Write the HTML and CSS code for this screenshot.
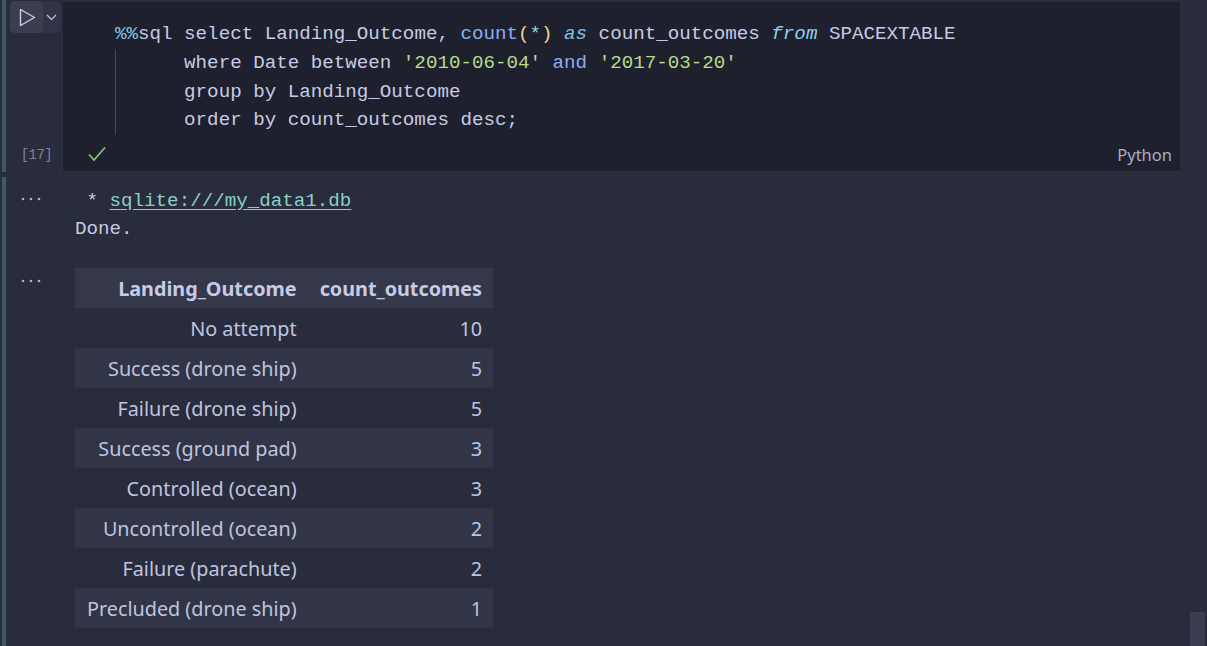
FILE: index.html
```html
<!DOCTYPE html>
<html>
<head>
<meta charset="utf-8">
<link rel="stylesheet" href="styles.css">
</head>
<body>
<div class="notebook">
  <div class="cell code-cell">
    <div class="bar"></div>
    <div class="gutter">
      <div class="run">
        <span class="run-btn">
          <svg width="17" height="19" viewBox="0 0 17 19"><path d="M1.5 1.5 L15.5 9.5 L1.5 17.5 Z" fill="none" stroke="#c9cde3" stroke-width="1.4" stroke-linejoin="round"/></svg>
        </span>
        <span class="run-more">
          <svg width="11" height="7" viewBox="0 0 11 7"><path d="M1 1 L5.5 5.5 L10 1" fill="none" stroke="#b5bad2" stroke-width="1.3"/></svg>
        </span>
      </div>
      <div class="exec">[17]</div>
    </div>
    <div class="editor">
      <pre class="code"><span class="magic">%%</span>sql select Landing_Outcome, <span class="fn">count</span><span class="paren">(</span><span class="op">*</span><span class="paren">)</span> <span class="kw">as</span> count_outcomes <span class="kw2">from</span> SPACEXTABLE
<span class="indent">      where Date between <span class="str">'2010-06-04'</span> <span class="fn">and</span> <span class="str">'2017-03-20'</span>
      group by Landing_Outcome
      order by count_outcomes desc;</span></pre>
      <div class="status">
        <svg class="check" width="18" height="16" viewBox="0 0 18 16"><path d="M1 8.5 L6 14 L17 1.5" fill="none" stroke="#8cc784" stroke-width="1.6"/></svg>
        <span class="lang">Python</span>
      </div>
    </div>
  </div>

  <div class="cell output-cell">
    <div class="bar"></div>
    <div class="outputs">
      <div class="out out-text">
        <div class="ogutter">
          <svg class="dots" width="20" height="4" viewBox="0 0 20 4"><circle cx="2" cy="2" r="1.3" fill="#aeb3cb"/><circle cx="10" cy="2" r="1.3" fill="#aeb3cb"/><circle cx="18" cy="2" r="1.3" fill="#aeb3cb"/></svg>
        </div>
        <pre class="stdout"> * <a class="link" href="#">sqlite:///my_data1.db</a>
Done.</pre>
      </div>
      <div class="out out-table">
        <div class="ogutter">
          <svg class="dots" width="20" height="4" viewBox="0 0 20 4"><circle cx="2" cy="2" r="1.3" fill="#aeb3cb"/><circle cx="10" cy="2" r="1.3" fill="#aeb3cb"/><circle cx="18" cy="2" r="1.3" fill="#aeb3cb"/></svg>
        </div>
        <table class="result">
          <thead>
            <tr><th>Landing_Outcome</th><th>count_outcomes</th></tr>
          </thead>
          <tbody>
            <tr><td>No attempt</td><td>10</td></tr>
            <tr><td>Success (drone ship)</td><td>5</td></tr>
            <tr><td>Failure (drone ship)</td><td>5</td></tr>
            <tr><td>Success (ground pad)</td><td>3</td></tr>
            <tr><td>Controlled (ocean)</td><td>3</td></tr>
            <tr><td>Uncontrolled (ocean)</td><td>2</td></tr>
            <tr><td>Failure (parachute)</td><td>2</td></tr>
            <tr><td>Precluded (drone ship)</td><td>1</td></tr>
          </tbody>
        </table>
      </div>
    </div>
  </div>
  <div class="scroll-thumb"></div>
</div>
</body>
</html>
```

FILE: styles.css
```css
html, body {
  margin: 0;
  padding: 0;
  background: #292c3d;
  height: 100%;
  overflow: hidden;
}

.notebook {
  position: relative;
  height: 646px;
  overflow: hidden;
  font-family: "Noto Sans", "Open Sans", sans-serif;
  color: #c6cbe2;
}

.cell {
  display: flex;
  align-items: stretch;
}

.bar {
  width: 4px;
  margin-left: 2px;
  background: #3b5a64;
  flex: none;
}

/* ---------- code cell ---------- */
.code-cell {
  height: 172px;
}

.gutter {
  width: 56px;
  flex: none;
  display: flex;
  flex-direction: column;
  justify-content: space-between;
}

.run {
  display: flex;
  margin: 1px 0 0 4px;
  height: 32px;
  width: 51px;
  background: #313447;
  border-radius: 5px;
}

.run-btn {
  width: 33px;
  height: 32px;
  background: #3b3e51;
  border-radius: 5px;
  display: flex;
  align-items: center;
  justify-content: center;
  padding-left: 1px;
  box-sizing: border-box;
}

.run-more {
  flex: 1;
  display: flex;
  align-items: center;
  justify-content: center;
  padding-right: 2px;
}

.exec {
  font-family: "Liberation Mono", monospace;
  font-size: 14px;
  letter-spacing: -0.6px;
  color: #7d8299;
  text-align: right;
  padding-right: 10px;
  line-height: 18px;
  margin-bottom: 8px;
}

.editor {
  flex: none;
  width: 1119px;
  margin-top: 1px;
  background: #1e202e;
  box-shadow: inset 0 0 0 1px #2a2d3f;
  display: flex;
  flex-direction: column;
  justify-content: space-between;
}

.code {
  margin: 0;
  padding: 19px 0 0 53px;
  font-family: "Liberation Mono", monospace;
  font-size: 19.2px;
  line-height: 28.75px;
  color: #c6cbe4;
}

.indent {
  display: block;
  background: linear-gradient(#464962, #464962) no-repeat 0 0 / 1px 100%;
}

.magic { color: #7fcbe8; }
.fn { color: #8aadf4; }
.paren { color: #eed49f; }
.op { color: #91d7e3; }
.kw { color: #7dc4e4; font-style: italic; }
.kw2 { color: #8bd3ea; font-style: italic; }
.str { color: #b6dc8c; }

.status {
  display: flex;
  align-items: center;
  justify-content: space-between;
  padding: 0 9px 8px 26px;
  height: 20px;
}

.lang {
  font-size: 16.5px;
  color: #a8aecb;
}

/* ---------- output cell ---------- */
.output-cell {
  margin-top: 5px;
  height: 480px;
}

.outputs {
  display: flex;
  flex-direction: column;
}

.out {
  display: flex;
  align-items: flex-start;
}

.ogutter {
  width: 69px;
  flex: none;
  padding-left: 15px;
  box-sizing: border-box;
}

.out-text {
  padding-top: 10px;
}

.out-text .dots {
  display: block;
  margin-top: 10px;
}

.stdout {
  margin: 0;
  font-family: "Liberation Mono", monospace;
  font-size: 19.2px;
  line-height: 28px;
  color: #c6cbe2;
}

.link {
  color: #86d1c4;
  text-decoration: underline;
  text-underline-offset: 3px;
}

.out-table {
  margin-top: 25px;
}

.out-table .dots {
  display: block;
  margin-top: 11px;
}

.result {
  border-collapse: collapse;
  font-size: 19.8px;
  color: #bfc5df;
}

.result th,
.result td {
  height: 40px;
  padding: 0 11px 0 12px;
  text-align: right;
  box-sizing: border-box;
}

.result th {
  font-weight: 700;
  color: #c6cbe6;
  background: #35384b;
}

.result tbody tr:nth-child(even) {
  background: #323547;
}

.scroll-thumb {
  position: absolute;
  left: 1190px;
  top: 612px;
  width: 15px;
  height: 40px;
  background: #3b3e53;
}
```
